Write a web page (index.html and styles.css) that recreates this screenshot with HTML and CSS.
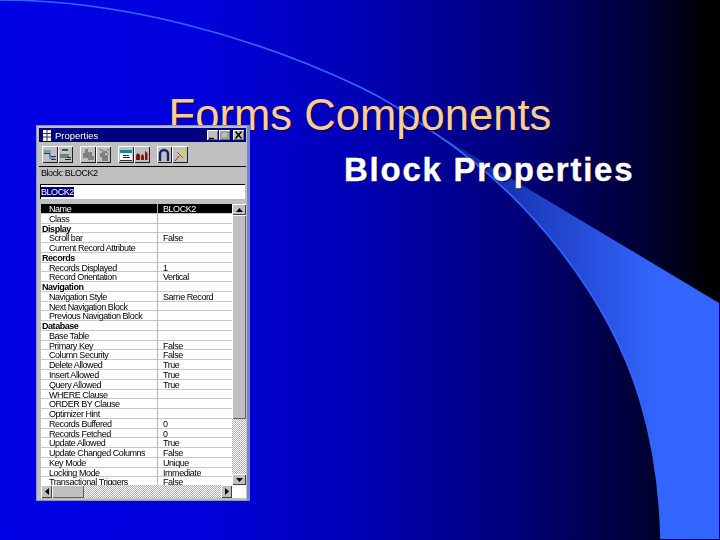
FILE: index.html
```html
<!DOCTYPE html>
<html lang="en">
<head>
<meta charset="utf-8">
<title>Forms Components</title>
<link rel="stylesheet" href="styles.css">
</head>
<body>
<main class="slide">
  <svg class="swoosh" viewBox="0 0 720 540" width="720" height="540" aria-hidden="true">
    <defs>
      <linearGradient id="wedge" gradientUnits="userSpaceOnUse" x1="440" y1="0" x2="660" y2="0">
        <stop offset="0" stop-color="#0c1f90"/>
        <stop offset="1" stop-color="#3366ff"/>
      </linearGradient>
    </defs>
    <path class="wedge" d="M425 127 L719 303 V539 H661 C660 490 652 440 640 400 C610 300 530 195 425 127 Z" fill="url(#wedge)"/>
    <path class="edge" d="M0 0 C120 0 250 35 360 87 C385 99 410 115 430 130 C530 195 610 300 640 400 C652 440 660 490 661 539"/>
  </svg>

  <h1 class="title">Forms Components</h1>
  <h2 class="subtitle">Block Properties</h2>

  <section class="window">
    <header class="titlebar">
      <svg class="app-icon" viewBox="0 0 8 11" width="8" height="11"><path fill="#fff" d="M0 0h8v11H0z"/><path stroke="#333" stroke-width="1" d="M0 3.500h8M0 7h8M4 0v11"/></svg>
      <span class="titlebar-text">Properties</span>
      <span class="win-btns">
        <span class="win-btn"><svg viewBox="0 0 11 10" width="11" height="10"><path stroke="#000" stroke-width="1.4" d="M2 8.500h5"/></svg></span>
        <span class="win-btn"><svg viewBox="0 0 11 10" width="11" height="10"><path fill="none" stroke="#8a8a8a" stroke-width="1.2" d="M2 2h7v6H2z"/></svg></span>
        <span class="win-btn close"><svg viewBox="0 0 11 10" width="11" height="10"><path stroke="#000" stroke-width="1.5" d="M2.500 1.500l6 7M8.500 1.500l-6 7"/></svg></span>
      </span>
    </header>

    <div class="toolbar">
      <div class="tool-group">
        <button class="tool"><svg viewBox="0 0 14 14" width="14" height="14"><path fill="#7f9fa8" d="M1 2h7v3H1zM6 8h6v3H6z"/><path stroke="#16408a" stroke-width="1" d="M1 5.500h6M7 5.500v3M8 8.500h5M8 11.500h5"/></svg></button>
        <button class="tool"><svg viewBox="0 0 14 14" width="14" height="14"><path fill="#1c4fa0" d="M4 1h6v2H4z"/><path fill="#e8d070" d="M4 3h6v2H4z"/><path fill="#6a7f90" d="M2 6h9v4H2z"/><path stroke="#102a70" stroke-width="1" d="M7 11.500h6M9 9.500h4"/></svg></button>
      </div>
      <div class="tool-group">
        <button class="tool"><svg viewBox="0 0 14 14" width="14" height="14"><path fill="#808080" d="M4 1h3v3h4v4h2v4H7v-2H2V5h2z"/></svg></button>
        <button class="tool"><svg viewBox="0 0 14 14" width="14" height="14"><path fill="#808080" d="M5 4h3v3h3v6H5V9H3V5h2z"/><path stroke="#707070" d="M2 1l10 5M12 1L8 4"/></svg></button>
      </div>
      <div class="tool-group">
        <button class="tool"><svg viewBox="0 0 14 14" width="14" height="14"><path fill="#fff" d="M1 2h12v10H1z"/><path fill="#118a96" d="M1 2h12v3H1z"/><path fill="#203040" d="M4 7h6v1H4zM4 9h7v1H4zM1 12h12v1H1z"/></svg></button>
        <button class="tool"><svg viewBox="0 0 14 14" width="14" height="14"><path fill="#8c1010" d="M1 12V7l2-2 2 2v5zM6 12V8l1.500-2L9 8v4zM10 12V3l2.500 2v7z"/></svg></button>
      </div>
      <div class="tool-group">
        <button class="tool"><svg viewBox="0 0 14 14" width="14" height="14"><path fill="none" stroke="#10246e" stroke-width="2.400" d="M3 13V6a4 4 0 0 1 8 0v7"/></svg></button>
        <button class="tool"><svg viewBox="0 0 14 14" width="14" height="14"><path fill="#e0cc50" d="M6 6l4-5 3 3-5 4z"/><path stroke="#707020" stroke-width="1" d="M4 4l6 6"/><path stroke="#a02020" stroke-width="1" d="M6 8l-4 5"/></svg></button>
      </div>
    </div>

    <div class="block-label">Block: BLOCK2</div>

    <div class="name-field"><span class="selected">BLOCK2</span></div>

    <div class="grid-area">
      <div class="rows">
        <div class="row current"><span class="key">Name</span><span class="val">BLOCK2</span></div>
        <div class="row"><span class="key">Class</span><span class="val"></span></div>
        <div class="row group"><span class="key">Display</span><span class="val"></span></div>
        <div class="row"><span class="key">Scroll bar</span><span class="val">False</span></div>
        <div class="row"><span class="key">Current Record Attribute</span><span class="val"></span></div>
        <div class="row group"><span class="key">Records</span><span class="val"></span></div>
        <div class="row"><span class="key">Records Displayed</span><span class="val">1</span></div>
        <div class="row"><span class="key">Record Orientation</span><span class="val">Vertical</span></div>
        <div class="row group"><span class="key">Navigation</span><span class="val"></span></div>
        <div class="row"><span class="key">Navigation Style</span><span class="val">Same Record</span></div>
        <div class="row"><span class="key">Next Navigation Block</span><span class="val"></span></div>
        <div class="row"><span class="key">Previous Navigation Block</span><span class="val"></span></div>
        <div class="row group"><span class="key">Database</span><span class="val"></span></div>
        <div class="row"><span class="key">Base Table</span><span class="val"></span></div>
        <div class="row"><span class="key">Primary Key</span><span class="val">False</span></div>
        <div class="row"><span class="key">Column Security</span><span class="val">False</span></div>
        <div class="row"><span class="key">Delete Allowed</span><span class="val">True</span></div>
        <div class="row"><span class="key">Insert Allowed</span><span class="val">True</span></div>
        <div class="row"><span class="key">Query Allowed</span><span class="val">True</span></div>
        <div class="row"><span class="key">WHERE Clause</span><span class="val"></span></div>
        <div class="row"><span class="key">ORDER BY Clause</span><span class="val"></span></div>
        <div class="row"><span class="key">Optimizer Hint</span><span class="val"></span></div>
        <div class="row"><span class="key">Records Buffered</span><span class="val">0</span></div>
        <div class="row"><span class="key">Records Fetched</span><span class="val">0</span></div>
        <div class="row"><span class="key">Update Allowed</span><span class="val">True</span></div>
        <div class="row"><span class="key">Update Changed Columns</span><span class="val">False</span></div>
        <div class="row"><span class="key">Key Mode</span><span class="val">Unique</span></div>
        <div class="row"><span class="key">Locking Mode</span><span class="val">Immediate</span></div>
        <div class="row"><span class="key">Transactional Triggers</span><span class="val">False</span></div>
      </div>
      <div class="vscroll">
        <span class="sbtn"><svg viewBox="0 0 7 4" width="7" height="4"><path d="M3.500 0L7 4H0z"/></svg></span>
        <span class="vthumb"></span>
        <span class="track"></span>
        <span class="sbtn"><svg viewBox="0 0 7 4" width="7" height="4"><path d="M0 0h7L3.500 4z"/></svg></span>
      </div>
      <div class="hscroll">
        <span class="sbtn"><svg viewBox="0 0 4 7" width="4" height="7"><path d="M4 0v7L0 3.500z"/></svg></span>
        <span class="hthumb"></span>
        <span class="track"></span>
        <span class="sbtn"><svg viewBox="0 0 4 7" width="4" height="7"><path d="M0 0v7l4-3.500z"/></svg></span>
      </div>
      <div class="corner"></div>
    </div>
  </section>
</main>
</body>
</html>
```

FILE: styles.css
```css
html, body {
  margin: 0;
  padding: 0;
  background: #000;
}

.slide {
  position: relative;
  width: 720px;
  height: 540px;
  overflow: hidden;
  box-sizing: border-box;
  padding-top: 90px;
  font-family: "Liberation Sans", Arial, sans-serif;
  background: linear-gradient(90deg, #0000e4 0, #0000dc 200px, #0000b4 360px, #000078 520px, #000030 650px, #000 712px);
}

.swoosh {
  position: absolute;
  left: 0;
  top: 0;
}

.edge {
  fill: none;
  stroke: #3366ff;
  stroke-width: 1.6;
}

.title {
  position: relative;
  margin: 0;
  height: 50px;
  line-height: 50px;
  font-size: 43.6px;
  font-weight: 400;
  text-align: center;
  color: #ffcc99;
  text-shadow: 1px 1px 1px #000044;
}

.subtitle {
  position: relative;
  margin: 10px 0 0 344px;
  height: 40px;
  line-height: 40px;
  font-size: 33px;
  font-weight: 700;
  letter-spacing: 1.75px;
  color: #fff;
  -webkit-text-stroke: 0.4px #fff;
  text-shadow: 1px 1px 1px #000044;
  white-space: nowrap;
}

/* Properties window */
.window {
  position: absolute;
  left: 36px;
  top: 125px;
  width: 214px;
  height: 376px;
  box-sizing: border-box;
  padding: 2px 1px 2px 2px;
  display: flex;
  flex-direction: column;
  background: #c0c0c0;
  border: 1px solid #8e94c8;
  border-right: 3px solid #7482d8;
  font-size: 9px;
  letter-spacing: -0.45px;
  color: #000;
  filter: blur(0.4px);
}

.titlebar {
  flex: none;
  height: 14px;
  display: flex;
  align-items: center;
  gap: 4px;
  padding: 0 2px 0 4px;
  background: #000080;
  color: #fff;
}

.app-icon {
  flex: none;
}

.titlebar-text {
  flex: 1;
  font-size: 9.5px;
  letter-spacing: 0;
}

.win-btns {
  display: flex;
  gap: 1px;
}

.win-btn {
  display: flex;
  width: 11px;
  height: 10px;
  background: #c0c0c0;
  box-shadow: inset 1px 1px 0 #fff, inset -1px -1px 0 #707070;
}

.win-btn.close {
  margin-left: 2px;
}

.toolbar {
  flex: none;
  height: 25px;
  box-sizing: border-box;
  display: flex;
  align-items: center;
  gap: 7px;
  padding: 1px 0 0 3px;
  border-bottom: 1px solid #000;
}

.tool-group {
  display: flex;
}

.tool {
  width: 15.6px;
  height: 17px;
  padding: 0;
  display: flex;
  align-items: center;
  justify-content: center;
  border: 0;
  background: #c0c0c0;
  box-shadow: inset 1px 1px 0 #fff, inset -1px -1px 0 #202020;
}

.block-label {
  flex: none;
  height: 12px;
  line-height: 12px;
  padding-left: 2px;
}

.name-field {
  flex: none;
  height: 15px;
  line-height: 14px;
  box-sizing: border-box;
  margin: 5px 1px 0 1px;
  background: #fff;
  border-top: 1px solid #000;
  border-left: 1px solid #000;
}

.selected {
  background: #000080;
  color: #fff;
}

.grid-area {
  flex: none;
  margin: 5px 0 0 2px;
  height: 294px;
  display: grid;
  grid-template-columns: 191px 14px;
  grid-template-rows: 281px 13px;
  background: #c0c0c0;
}

.rows {
  overflow: hidden;
  background: #fff;
}

.row {
  display: grid;
  grid-template-columns: 117px 74px;
  height: 9.78px;
  line-height: 10.4px;
  box-sizing: border-box;
  border-bottom: 1px solid #c8c8c8;
  white-space: nowrap;
}

.key {
  padding-left: 8px;
  border-right: 1px solid #b8b8b8;
}

.val {
  padding-left: 5px;
}

.row.current {
  background: #000;
  color: #fff;
}

.row.group .key {
  padding-left: 1px;
  font-weight: 700;
}

.vscroll {
  display: flex;
  flex-direction: column;
}

.hscroll {
  display: flex;
}

.corner {
  background: #fff;
}

.sbtn {
  flex: none;
  display: flex;
  align-items: center;
  justify-content: center;
  width: 14px;
  height: 11px;
  background: #c0c0c0;
  box-shadow: inset 1px 1px 0 #fff, inset -1px -1px 0 #404040;
}

.hscroll .sbtn {
  width: 11px;
  height: 13px;
}

.vthumb {
  flex: none;
  height: 204px;
  background: #c0c0c0;
  box-shadow: inset 1px 1px 0 #fff, inset -1px -1px 0 #606060;
}

.hthumb {
  flex: none;
  width: 32px;
  background: #c0c0c0;
  box-shadow: inset 1px 1px 0 #fff, inset -1px -1px 0 #606060;
}

.track {
  flex: 1;
  background: repeating-conic-gradient(#fff 0 25%, #b0b0b0 0 50%) 0 0 / 2px 2px;
}
```
